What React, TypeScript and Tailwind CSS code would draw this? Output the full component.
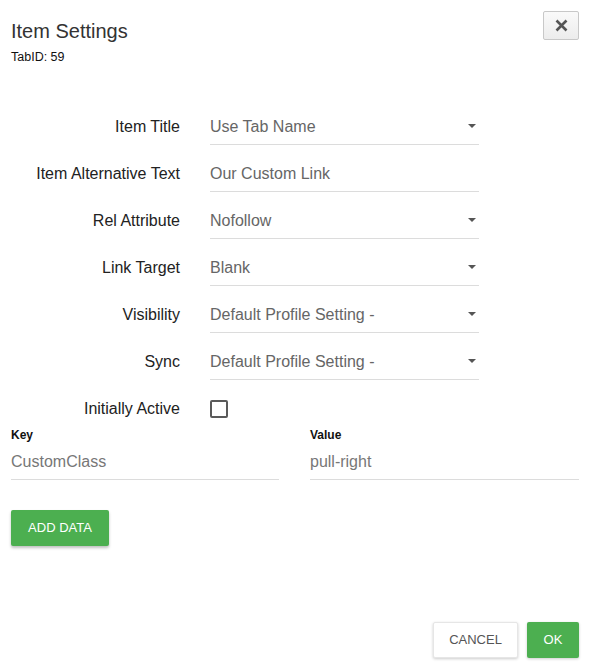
import React from "react";

const Caret = () => (
  <svg width="8" height="4" viewBox="0 0 8 4" className="absolute right-[3px] top-[16px]">
    <polygon points="0,0 8,0 4,4" fill="#555" />
  </svg>
);

type Row = { label: string; value: string; select?: boolean };

const rows: Row[] = [
  { label: "Item Title", value: "Use Tab Name", select: true },
  { label: "Item Alternative Text", value: "Our Custom Link" },
  { label: "Rel Attribute", value: "Nofollow", select: true },
  { label: "Link Target", value: "Blank", select: true },
  { label: "Visibility", value: "Default Profile Setting -", select: true },
  { label: "Sync", value: "Default Profile Setting -", select: true },
];

export default function App() {
  return (
    <div
      className="w-[590px] h-[668px] bg-white flex flex-col"
      style={{ fontFamily: '"Liberation Sans", Arial, sans-serif' }}
    >
      {/* Header */}
      <div className="flex justify-between items-start pt-[11px] pl-[11px] pr-[11px]">
        <div className="mt-[6px]">
          <div className="text-[20px] leading-[28px] text-[#333]">Item Settings</div>
          <div className="mt-[4px] text-[12.5px] leading-[16px] text-[#111]">TabID: 59</div>
        </div>
        <button className="w-[36px] h-[29px] flex items-center justify-center border border-[#c8c8c8] rounded-[2px] bg-gradient-to-b from-[#fafafa] to-[#ececec]">
          <svg width="13" height="13" viewBox="0 0 13 13">
            <path d="M1.5 1.5 L11.5 11.5 M11.5 1.5 L1.5 11.5" stroke="#555" strokeWidth="2.6" strokeLinecap="butt" />
          </svg>
        </button>
      </div>

      {/* Form */}
      <div className="mt-[43px] pl-[11px] flex flex-col gap-[10px]">
        {rows.map((r) => (
          <div key={r.label} className="flex items-center h-[37px]">
            <div className="w-[169px] text-right text-[16px] text-[#222]">{r.label}</div>
            <div className="ml-[30px] w-[269px] h-[37px] relative border-b border-[#dcdcdc] flex items-center text-[16px] text-[#666]">
              <span className="translate-y-[1px]">{r.value}</span>
              {r.select && <Caret />}
            </div>
          </div>
        ))}
        <div className="flex items-center h-[37px]">
          <div className="w-[169px] text-right text-[16px] text-[#222]">Initially Active</div>
          <div className="ml-[30px] w-[18px] h-[18px] border-2 border-[#5a5a5a] rounded-[2px]" />
        </div>
      </div>

      {/* Key / Value */}
      <div className="px-[11px] flex gap-[31px]">
        <div className="w-[268px]">
          <div className="text-[12px] leading-[16px] font-bold text-[#111]">Key</div>
          <div className="h-[37px] border-b border-[#dcdcdc] flex items-center text-[16px] text-[#777]">
            <span className="translate-y-[1px]">CustomClass</span>
          </div>
        </div>
        <div className="w-[269px]">
          <div className="text-[12px] leading-[16px] font-bold text-[#111]">Value</div>
          <div className="h-[37px] border-b border-[#dcdcdc] flex items-center text-[16px] text-[#777]">
            <span className="translate-y-[1px]">pull-right</span>
          </div>
        </div>
      </div>

      <div className="pl-[11px] mt-[30px]">
        <button className="w-[98px] h-[36px] bg-[#4caf50] text-white text-[13px] rounded-[2px] shadow-[0_2px_3px_rgba(0,0,0,0.25)]">
          ADD DATA
        </button>
      </div>

      {/* Footer */}
      <div className="mt-auto flex justify-end gap-[9px] pr-[11px] pb-[10px]">
        <button className="w-[85px] h-[36px] bg-white text-[#555] text-[13px] rounded-[2px] border border-[#e6e6e6] shadow-[0_1px_3px_rgba(0,0,0,0.2)]">
          CANCEL
        </button>
        <button className="w-[52px] h-[36px] bg-[#4caf50] text-white text-[13px] rounded-[2px] shadow-[0_1px_3px_rgba(0,0,0,0.2)]">
          OK
        </button>
      </div>
    </div>
  );
}
